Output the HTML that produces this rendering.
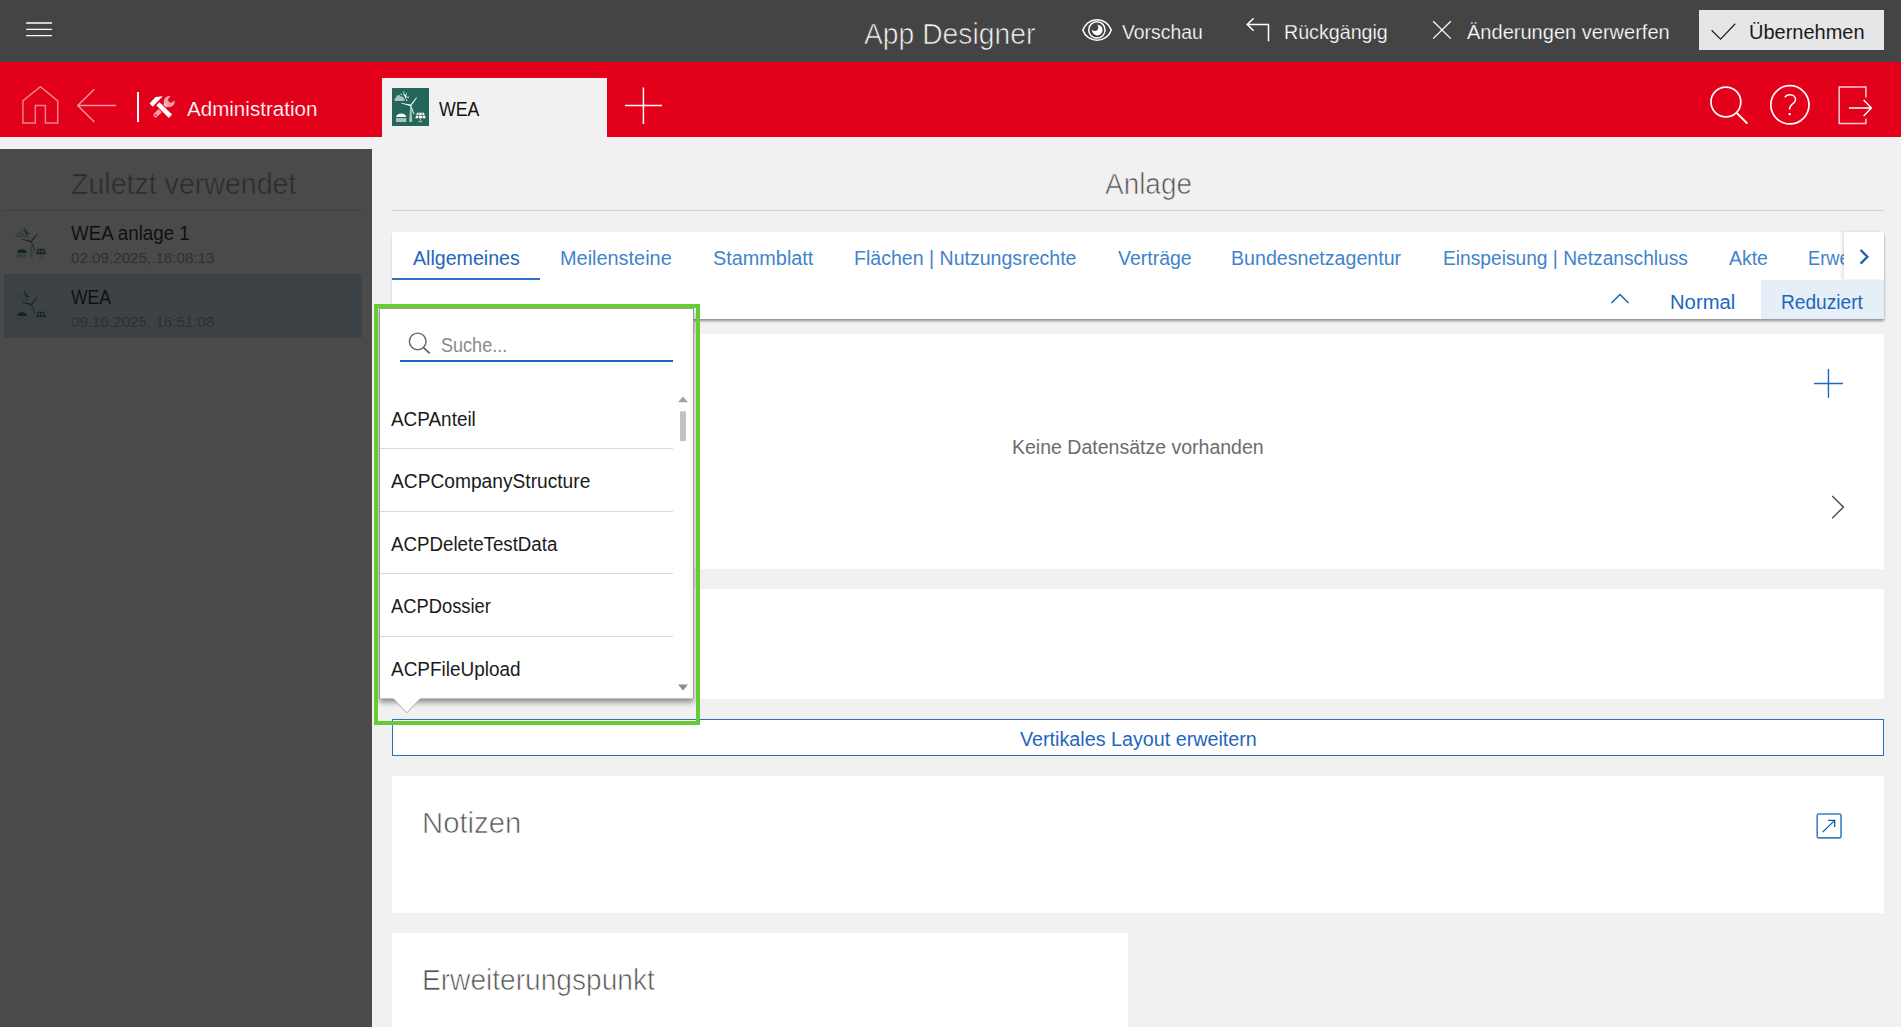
<!DOCTYPE html>
<html lang="de"><head><meta charset="utf-8"><title>App Designer</title>
<style>
html,body{margin:0;padding:0}
html{width:1901px;height:1027px;overflow:hidden}
body{width:1901px;height:1027px;position:relative;overflow:hidden;background:#f1f1f1;font-family:"Liberation Sans",sans-serif}
.ab{position:absolute}
.t{position:absolute;white-space:nowrap;line-height:1;transform-origin:0 0;display:block}
.pb{display:inline-block;width:0;height:0}
#topbar{position:absolute;left:0;top:0;width:1901px;height:62px;background:#444444}
#redbar{position:absolute;left:0;top:62px;width:1901px;height:75px;background:#e2001a}
#sidebar{position:absolute;left:0;top:149px;width:372px;height:878px;background:#4a4a4a}
#main{position:absolute;left:372px;top:137px;width:1529px;height:890px;overflow:hidden}
.card{position:absolute;background:#fff}
svg{overflow:visible}
</style></head><body>
<header id="topbar"><svg class="ab" style="left:0;top:0" width="80" height="62"><path d="M26.2 23.05h25.7M26.2 29.4h25.7M26.2 35.6h25.7" stroke="#fff" stroke-width="1.4" fill="none"/></svg><span class="t" style="left:863.80px;top:19.00px;font-size:30.3px;color:#f2f2f2;transform:scaleX(0.9331);-webkit-text-stroke:0.7px #444444;">App Designer</span><svg class="ab" style="left:1080px;top:16px" width="34" height="28" viewBox="0 0 34 28"><g fill="none" stroke="#fff" stroke-width="1.5">
<path d="M2.8 14 A15 15 0 0 1 31.3 14 A15 15 0 0 1 2.8 14z" stroke-linejoin="round"/><circle cx="16.9" cy="13.9" r="8.2"/></g>
<circle cx="17.3" cy="14.1" r="5.3" fill="#fff"/><circle cx="14.9" cy="11.6" r="3.4" fill="#444444"/></svg><span class="t" style="left:1122.00px;top:22.00px;font-size:20px;color:#fff;transform:scaleX(0.9676);-webkit-text-stroke:0.25px #444444;">Vorschau</span><svg class="ab" style="left:1240px;top:12px" width="36" height="34"><path d="M28.5 29.3V12.5H7.4M13.7 6.2L7.2 12.5L13.7 18.8" stroke="#fff" stroke-width="1.5" fill="none"/></svg><span class="t" style="left:1283.72px;top:22.00px;font-size:20px;color:#fff;transform:scaleX(0.9826);-webkit-text-stroke:0.25px #444444;">Rückgängig</span><svg class="ab" style="left:1428px;top:16px" width="30" height="30"><path d="M5.2 5.3L22.8 22.6M22.8 5.3L5.2 22.6" stroke="#fff" stroke-width="1.3" fill="none"/></svg><span class="t" style="left:1467.20px;top:22.00px;font-size:20px;color:#fff;transform:scaleX(1.0018);-webkit-text-stroke:0.25px #444444;">Änderungen verwerfen</span><div class="ab" style="left:1699px;top:10px;width:185px;height:40px;background:#e6e6e6"></div><svg class="ab" style="left:1706px;top:18px" width="36" height="28"><path d="M5.6 12.3L14.6 21.1L29.2 5.7" stroke="#222" stroke-width="1.3" fill="none"/></svg><span class="t" style="left:1748.90px;top:21.90px;font-size:20px;color:#1a1a1a;transform:scaleX(0.9991);">Übernehmen</span></header>
<nav id="redbar"><svg class="ab" style="left:18px;top:20px" width="46" height="46"><path d="M4.9 41V18.9L22.4 4.7L39.7 18.9V41H27.4V23.5H17.3V41z" stroke="rgba(255,255,255,.5)" stroke-width="1.5" fill="none"/></svg><svg class="ab" style="left:72px;top:22px" width="50" height="42"><path d="M44.1 21.5H5.7M22.3 5.2L5.7 21.5L22.3 37.9" stroke="rgba(255,255,255,.6)" stroke-width="1.4" fill="none"/></svg><div class="ab" style="left:137px;top:30px;width:1.5px;height:30px;background:#fff"></div><svg class="ab" style="left:140px;top:24px" width="50" height="40" viewBox="0 0 50 40">
<g fill="rgba(255,255,255,.62)" transform="translate(15.6,29.2) rotate(-45)"><path fill-rule="evenodd" d="M0 -2.3H15V2.3H0A2.3 2.3 0 0 1 0 -2.3zM-.1 -.9a.9.9 0 1 0 .2 0z"/>
<path d="M23.97 -2.7A5.5 5.5 0 1 0 23.97 2.7L21.6 2.7A2.7 2.7 0 0 1 21.6 -2.7z"/></g>
<g stroke="#e2001a" stroke-width="1.6" stroke-linejoin="miter"><path d="M9.5 17.5L15.6 11.1L22.8 10.2L12.7 20.8z"/><path d="M16.2 19.3L19.5 16.2L32.1 28.6L28.8 32.1z"/></g>
<path d="M9.5 17.5L15.6 11.1L22.8 10.2L12.7 20.8z" fill="#fff"/>
<path d="M16.2 19.3L19.5 16.2L32.1 28.6L28.8 32.1z" fill="#fff"/></svg><span class="t" style="left:186.90px;top:36.70px;font-size:20px;color:#fff;transform:scaleX(1.0287);-webkit-text-stroke:0.2px #e2001a;">Administration</span><div class="ab" style="left:382px;top:16px;width:225px;height:59px;background:#f1f1f1"></div><svg class="ab" style="left:392px;top:26px" width="37" height="38" viewBox="0 0 37 38"><rect x="0" y="0" width="37" height="38" fill="#25665a"/>
<path d="M3.6 13 a1.7 1.7 0 0 1 .4 -3.3 a2.6 2.6 0 0 1 4.9 -1.2 a2.3 2.3 0 0 1 3 2.2 a1.2 1.2 0 0 1 -.3 2.3z" fill="#a9c4bd"/>
<path d="M11 6.6 a2.3 2.3 0 1 1 1.6 4.2 a3 3 0 0 0 -1.6 -4.2z" fill="#ffffff"/>
<g stroke="#ffffff" stroke-width="1" stroke-linecap="round"><path d="M11.8 4v1.2M9 6l.8.6M14.2 6.2l.6-.5M15.6 9.2h1M14.5 11.6l.3 1"/></g>
<path d="M18.9 16.2 L24.4 9.2 L25 9.7 L19.8 17z" fill="#ffffff"/>
<path d="M18.2 18 L9.2 15.6 L9.4 14.9 L18.6 16.6z" fill="#ffffff"/>
<path d="M19.4 18.3 L22.6 26.2 L21.9 26.5 L18.4 19z" fill="#ffffff"/>
<path d="M18.1 18.6 L19.4 18.6 L20.3 34 L17.1 34z" fill="#a9c4bd"/>
<circle cx="18.7" cy="17.5" r="1" fill="#ffffff"/>
<path d="M4 29 a5.2 4.2 0 0 1 10.3 0z" fill="#ffffff"/>
<rect x="4" y="30.1" width="10.3" height="3.9" fill="#a9c4bd"/>
<path d="M25 24.7 h7 l1.7 5.6 h-10.4z" fill="#ffffff"/>
<path d="M23.8 27.4h9.4M26.9 24.7l-.6 5.6M30 24.7l.6 5.6" stroke="#25665a" stroke-width=".7" fill="none"/>
<path d="M28.4 30.3v3.2M26.2 33.6h4.4" stroke="#a9c4bd" stroke-width=".9" fill="none"/>
</svg><span class="t" style="left:439.00px;top:36.60px;font-size:20px;color:#111;transform:scaleX(0.8871);">WEA</span><svg class="ab" style="left:620px;top:20px" width="48" height="48"><path d="M5 23.6H42M23.4 5.4V42" stroke="#fff" stroke-width="1.5" fill="none"/></svg><svg class="ab" style="left:1700px;top:18px" width="56" height="52"><circle cx="25.9" cy="22" r="14.9" stroke="#fff" stroke-width="1.7" fill="none"/><path d="M36.8 33L47.4 43.6" stroke="#fff" stroke-width="1.9"/></svg><svg class="ab" style="left:1764px;top:18px" width="52" height="52"><circle cx="25.9" cy="24.8" r="19.1" stroke="#fff" stroke-width="1.7" fill="none"/><path d="M20.8 17.2C22.8 14.6 27.6 13.8 30.2 16.2C33 19 31.2 22.4 28.4 24.2C26.2 25.8 25.6 26.8 25.6 29.6" stroke="#fff" stroke-width="1.5" fill="none"/><rect x="24.6" y="33" width="2.1" height="2.2" fill="#fff"/></svg><svg class="ab" style="left:1830px;top:18px" width="50" height="52"><path d="M35.9 17.4V6.9H9.2V43.4H35.9V38.8" stroke="rgba(255,255,255,.8)" stroke-width="1.5" fill="none"/><path d="M19 28H41M33.6 20L41.4 28L33.6 36" stroke="#fff" stroke-width="1.4" fill="none"/></svg></nav>
<aside id="sidebar"><span class="t" style="left:70.80px;top:20.00px;font-size:30.3px;color:#2a2a2a;transform:scaleX(0.9424);-webkit-text-stroke:0.7px #4a4a4a;">Zuletzt verwendet</span><div class="ab" style="left:4px;top:61px;width:358px;height:1px;background:#3d3d3d"></div><div class="ab" style="left:4px;top:125px;width:358px;height:63.5px;background:#3d4247"></div><svg class="ab" style="left:16px;top:79.2px" width="30.4" height="30.4" viewBox="3 3.6 31 31">
<path d="M3.6 13 a1.7 1.7 0 0 1 .4 -3.3 a2.6 2.6 0 0 1 4.9 -1.2 a2.3 2.3 0 0 1 3 2.2 a1.2 1.2 0 0 1 -.3 2.3z" fill="#35423d"/>
<path d="M11 6.6 a2.3 2.3 0 1 1 1.6 4.2 a3 3 0 0 0 -1.6 -4.2z" fill="#13271f"/>
<g stroke="#13271f" stroke-width="1" stroke-linecap="round"><path d="M11.8 4v1.2M9 6l.8.6M14.2 6.2l.6-.5M15.6 9.2h1M14.5 11.6l.3 1"/></g>
<path d="M18.9 16.2 L24.4 9.2 L25 9.7 L19.8 17z" fill="#13271f"/>
<path d="M18.2 18 L9.2 15.6 L9.4 14.9 L18.6 16.6z" fill="#13271f"/>
<path d="M19.4 18.3 L22.6 26.2 L21.9 26.5 L18.4 19z" fill="#13271f"/>
<path d="M18.1 18.6 L19.4 18.6 L20.3 34 L17.1 34z" fill="#35423d"/>
<circle cx="18.7" cy="17.5" r="1" fill="#13271f"/>
<path d="M4 29 a5.2 4.2 0 0 1 10.3 0z" fill="#13271f"/>
<rect x="4" y="30.1" width="10.3" height="3.9" fill="#35423d"/>
<path d="M25 24.7 h7 l1.7 5.6 h-10.4z" fill="#13271f"/>
<path d="M23.8 27.4h9.4M26.9 24.7l-.6 5.6M30 24.7l.6 5.6" stroke="#4a4a4a" stroke-width=".7" fill="none"/>
<path d="M28.4 30.3v3.2M26.2 33.6h4.4" stroke="#35423d" stroke-width=".9" fill="none"/>
</svg><span class="t" style="left:70.90px;top:73.90px;font-size:20px;color:#101010;transform:scaleX(0.9371);">WEA anlage 1</span><span class="t" style="left:70.90px;top:101.60px;font-size:14.5px;color:#303030;transform:scaleX(1.0467);">02.09.2025, 18:08:13</span><svg class="ab" style="left:16px;top:142px" width="30.4" height="30.4" viewBox="3 3.6 31 31">
<path d="M3.6 13 a1.7 1.7 0 0 1 .4 -3.3 a2.6 2.6 0 0 1 4.9 -1.2 a2.3 2.3 0 0 1 3 2.2 a1.2 1.2 0 0 1 -.3 2.3z" fill="#35423d"/>
<path d="M11 6.6 a2.3 2.3 0 1 1 1.6 4.2 a3 3 0 0 0 -1.6 -4.2z" fill="#13271f"/>
<g stroke="#13271f" stroke-width="1" stroke-linecap="round"><path d="M11.8 4v1.2M9 6l.8.6M14.2 6.2l.6-.5M15.6 9.2h1M14.5 11.6l.3 1"/></g>
<path d="M18.9 16.2 L24.4 9.2 L25 9.7 L19.8 17z" fill="#13271f"/>
<path d="M18.2 18 L9.2 15.6 L9.4 14.9 L18.6 16.6z" fill="#13271f"/>
<path d="M19.4 18.3 L22.6 26.2 L21.9 26.5 L18.4 19z" fill="#13271f"/>
<path d="M18.1 18.6 L19.4 18.6 L20.3 34 L17.1 34z" fill="#35423d"/>
<circle cx="18.7" cy="17.5" r="1" fill="#13271f"/>
<path d="M4 29 a5.2 4.2 0 0 1 10.3 0z" fill="#13271f"/>
<rect x="4" y="30.1" width="10.3" height="3.9" fill="#35423d"/>
<path d="M25 24.7 h7 l1.7 5.6 h-10.4z" fill="#13271f"/>
<path d="M23.8 27.4h9.4M26.9 24.7l-.6 5.6M30 24.7l.6 5.6" stroke="#4a4a4a" stroke-width=".7" fill="none"/>
<path d="M28.4 30.3v3.2M26.2 33.6h4.4" stroke="#35423d" stroke-width=".9" fill="none"/>
</svg><span class="t" style="left:70.90px;top:137.60px;font-size:20px;color:#101010;transform:scaleX(0.8741);">WEA</span><span class="t" style="left:70.90px;top:165.90px;font-size:14.5px;color:#2c3034;transform:scaleX(1.0467);">09.10.2025, 16:51:08</span></aside>
<main id="main"><span class="t" style="left:732.80px;top:32.00px;font-size:30.3px;color:#555;transform:scaleX(0.9220);-webkit-text-stroke:0.7px #f1f1f1;">Anlage</span><div class="ab" style="left:20px;top:73px;width:1492px;height:1px;background:#d4d4d4"></div><div class="card" style="left:20px;top:95px;width:1492px;height:87px;box-shadow:0 2px 2.5px -0.5px rgba(0,0,0,.4)"></div><span class="t" style="left:40.50px;top:111.00px;font-size:20px;color:#1f66bd;transform:scaleX(0.9803);">Allgemeines</span><span class="t" style="left:188.21px;top:111.00px;font-size:20px;color:#3f83cc;transform:scaleX(0.9949);">Meilensteine</span><span class="t" style="left:340.50px;top:111.00px;font-size:20px;color:#3f83cc;transform:scaleX(0.9923);">Stammblatt</span><span class="t" style="left:482.32px;top:111.00px;font-size:20px;color:#3f83cc;transform:scaleX(0.9778);">Flächen | Nutzungsrechte</span><span class="t" style="left:745.70px;top:111.00px;font-size:20px;color:#3f83cc;transform:scaleX(0.9737);">Verträge</span><span class="t" style="left:859.12px;top:111.00px;font-size:20px;color:#3f83cc;transform:scaleX(0.9809);">Bundesnetzagentur</span><span class="t" style="left:1071.04px;top:111.00px;font-size:20px;color:#3f83cc;transform:scaleX(0.9594);">Einspeisung | Netzanschluss</span><span class="t" style="left:1356.60px;top:111.00px;font-size:20px;color:#3f83cc;transform:scaleX(0.9725);">Akte</span><div class="ab" style="left:1432px;top:103px;width:40px;height:30px;overflow:hidden"><span class="t" style="left:3.89px;top:8.00px;font-size:20px;color:#3f83cc;transform:scaleX(0.9145);">Erweiterungen</span></div><div class="ab" style="left:20px;top:140.7px;width:148px;height:2px;background:#2a72c8"></div><div class="ab" style="left:1472px;top:95px;width:40px;height:47px;background:#fff;box-shadow:-2px 0 3px rgba(0,0,0,.12)"></div><svg class="ab" style="left:1482px;top:108px" width="20" height="24"><path d="M6.6 5L13.4 11.8L6.6 18.6" stroke="#1a5fb4" stroke-width="2.3" fill="none"/></svg><div class="ab" style="left:1389px;top:143px;width:123px;height:39px;background:#e6eef8"></div><svg class="ab" style="left:1236px;top:153px" width="24" height="16"><path d="M3.4 13L12 4.4L20.6 13" stroke="#1a5fb4" stroke-width="1.4" fill="none"/></svg><span class="t" style="left:1298.19px;top:155.00px;font-size:20px;color:#1f66bd;transform:scaleX(1.0125);">Normal</span><span class="t" style="left:1409.34px;top:155.00px;font-size:20px;color:#1f66bd;transform:scaleX(0.9560);">Reduziert</span><div class="card" style="left:20px;top:197px;width:1492px;height:235px"></div><svg class="ab" style="left:1440px;top:230px" width="34" height="34"><path d="M2 16.45H30.9M16.45 2V30.8" stroke="#1c68be" stroke-width="1.4" fill="none"/></svg><span class="t" style="left:640.42px;top:299.70px;font-size:20px;color:#6c6c6c;transform:scaleX(0.9756);">Keine Datensätze vorhanden</span><svg class="ab" style="left:1456px;top:355px" width="20" height="30"><path d="M4.2 4L15.4 15.1L4.2 26.2" stroke="#555" stroke-width="1.5" fill="none"/></svg><div class="card" style="left:20px;top:452px;width:1492px;height:110px"></div><div class="ab" style="left:20px;top:582px;width:1490px;height:35px;background:#fff;border:1px solid #2a6fc2"></div><span class="t" style="left:647.90px;top:591.90px;font-size:20px;color:#1f66bd;transform:scaleX(0.9862);">Vertikales Layout erweitern</span><div class="card" style="left:20px;top:639px;width:1492px;height:137px"></div><span class="t" style="left:49.77px;top:671.00px;font-size:30.3px;color:#555;transform:scaleX(0.9659);-webkit-text-stroke:0.7px #fff;">Notizen</span><svg class="ab" style="left:1442px;top:674px" width="30" height="30"><rect x="3.2" y="3" width="23.8" height="23.9" rx="1.4" stroke="#3d7fca" stroke-width="1.6" fill="none"/><path d="M8.6 21.1L20.5 9.6M14 9.4H20.7V15.9" stroke="#0f5cb8" stroke-width="1.3" fill="none"/></svg><div class="card" style="left:20px;top:796px;width:736px;height:94px"></div><span class="t" style="left:50.24px;top:828.00px;font-size:30.3px;color:#555;transform:scaleX(0.9278);-webkit-text-stroke:0.7px #fff;">Erweiterungspunkt</span></main>
<div id="popup" class="ab" style="left:379px;top:308px;width:313px;height:389px;background:#fff;border:1px solid #9a9a9a;border-bottom-color:#c2c2c2;box-shadow:0 3px 6px rgba(0,0,0,.45)"><svg class="ab" style="left:26px;top:23px" width="30" height="30"><circle cx="11.7" cy="9.4" r="8.3" stroke="#666" stroke-width="1.4" fill="none"/><path d="M17.4 15.6L23.8 21.4" stroke="#666" stroke-width="1.9"/></svg><span class="t" style="left:60.60px;top:25.60px;font-size:20px;color:#8a8a8a;transform:scaleX(0.9022);">Suche...</span><div class="ab" style="left:20px;top:51px;width:273px;height:2px;background:#1a66c4"></div><span class="t" style="left:10.80px;top:99.80px;font-size:20px;color:#1a1a1a;transform:scaleX(0.9459);">ACPAnteil</span><div class="ab" style="left:0;top:139px;width:293px;height:1px;background:#d9d9d9"></div><span class="t" style="left:10.80px;top:162.30px;font-size:20px;color:#1a1a1a;transform:scaleX(0.9589);">ACPCompanyStructure</span><div class="ab" style="left:0;top:201.7px;width:293px;height:1px;background:#d9d9d9"></div><span class="t" style="left:10.80px;top:224.80px;font-size:20px;color:#1a1a1a;transform:scaleX(0.9354);">ACPDeleteTestData</span><div class="ab" style="left:0;top:264.4px;width:293px;height:1px;background:#d9d9d9"></div><span class="t" style="left:10.80px;top:287.30px;font-size:20px;color:#1a1a1a;transform:scaleX(0.9171);">ACPDossier</span><div class="ab" style="left:0;top:327.1px;width:293px;height:1px;background:#d9d9d9"></div><span class="t" style="left:10.80px;top:349.80px;font-size:20px;color:#1a1a1a;transform:scaleX(0.9476);">ACPFileUpload</span><svg class="ab" style="left:297px;top:86.6px" width="12" height="300"><path d="M1 6.2L6 .6L11 6.2z" fill="#a3a3a3"/><rect x="3" y="15.4" width="6" height="29.6" fill="#c1c1c1"/><path d="M1 288.4L6 294.4L11 288.4z" fill="#8c8c8c"/></svg></div><svg class="ab" style="left:393px;top:698px" width="28" height="17"><path d="M0 0H27.6L13.8 14.8z" fill="#fff"/><path d="M.4 .9L13.8 14.8L27.2 .9" stroke="#a6a6a6" stroke-width="1" fill="none"/></svg><svg class="ab" style="left:0;top:0;pointer-events:none" width="1901" height="1027"><rect x="376" y="306" width="322" height="417" stroke="#66cc33" stroke-width="4" fill="none"/></svg></body></html>
